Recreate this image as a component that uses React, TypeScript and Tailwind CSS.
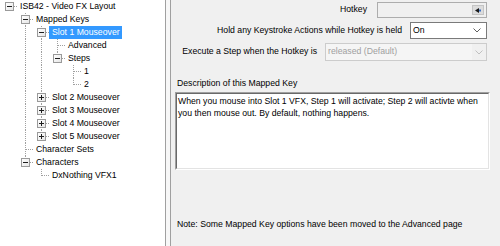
import React from 'react';

type Row = {
    label: string;
    level: number;
    box?: 'minus' | 'plus';
    last: boolean;
    anc: boolean[];
    selected?: boolean;
};

const rows: Row[] = [
    { label: 'ISB42 - Video FX Layout', level: 0, box: 'minus', last: true, anc: [] },
    { label: 'Mapped Keys', level: 1, box: 'minus', last: false, anc: [false] },
    { label: 'Slot 1 Mouseover', level: 2, box: 'minus', last: false, anc: [false, true], selected: true },
    { label: 'Advanced', level: 3, last: false, anc: [false, true, true] },
    { label: 'Steps', level: 3, box: 'minus', last: true, anc: [false, true, true] },
    { label: '1', level: 4, last: false, anc: [false, true, true, false] },
    { label: '2', level: 4, last: true, anc: [false, true, true, false] },
    { label: 'Slot 2 Mouseover', level: 2, box: 'plus', last: false, anc: [false, true] },
    { label: 'Slot 3 Mouseover', level: 2, box: 'plus', last: false, anc: [false, true] },
    { label: 'Slot 4 Mouseover', level: 2, box: 'plus', last: false, anc: [false, true] },
    { label: 'Slot 5 Mouseover', level: 2, box: 'plus', last: true, anc: [false, true] },
    { label: 'Character Sets', level: 1, last: false, anc: [false] },
    { label: 'Characters', level: 1, box: 'minus', last: true, anc: [false] },
    { label: 'DxNothing VFX1', level: 2, last: true, anc: [false, false] },
];

const TreeRow: React.FC<{ row: Row }> = ({ row }) => {
    const isRoot = row.level === 0;
    return (
        <div className="flex h-[13px] items-center">
            {row.anc.map((on, i) => (
                <div key={i} className="relative w-[16px] h-[13px] shrink-0">
                    {on && <span className="absolute left-[8px] top-0 h-[13px] border-l border-dotted border-[#a0a0a0]" />}
                </div>
            ))}
            <div className="relative w-[16px] h-[13px] shrink-0">
                {!isRoot && (
                    <span
                        className={`absolute left-[8px] top-0 border-l border-dotted border-[#a0a0a0] ${row.last ? 'h-[7px]' : 'h-[13px]'}`}
                    />
                )}
                <span className="absolute left-[8px] top-[6px] w-[8px] border-t border-dotted border-[#a0a0a0]" />
                {row.box && (
                    <span className="absolute left-[4px] top-[2px] w-[9px] h-[9px] border border-[#9a9a9a] bg-gradient-to-br from-white to-[#e6e6e6]">
                        <span className="absolute left-[1px] top-[3px] w-[5px] h-[1px] bg-[#1e1e1e]" />
                        {row.box === 'plus' && <span className="absolute left-[3px] top-[1px] w-[1px] h-[5px] bg-[#1e1e1e]" />}
                    </span>
                )}
            </div>
            <span
                className={`h-[13px] leading-[13px] pl-[3px] pr-[2px] whitespace-nowrap ${
                    row.selected ? 'bg-[#3399ff] text-white' : 'text-black'
                }`}
            >
                {row.label}
            </span>
        </div>
    );
};

const Chevron: React.FC<{ color: string }> = ({ color }) => (
    <svg width="8" height="5" viewBox="0 0 8 5" className="shrink-0">
        <path d="M0.5 0.5 L4 4 L7.5 0.5" fill="none" stroke={color} strokeWidth="1" />
    </svg>
);

export default function App() {
    return (
        <div
            className="w-[500px] h-[246px] flex bg-[#f0f0f0] overflow-hidden text-[8.7px]"
            style={{ fontFamily: '"Liberation Sans", Arial, sans-serif' }}
        >
            {/* tree */}
            <div className="w-[166px] h-full bg-white border-r border-[#a0a0a0] pl-[1px] shrink-0">
                {rows.map((r, i) => (
                    <TreeRow key={i} row={r} />
                ))}
            </div>
            <div className="w-[4px] h-full bg-[#f7f7f7] shrink-0" />

            {/* properties */}
            <div className="flex-1 h-full flex flex-col border-l border-[#a0a0a0] text-black">
                <div className="mt-[2px] h-[16px] flex items-center justify-end pr-[13px]">
                    <span>Hotkey</span>
                    <div className="ml-[10px] w-[110px] h-[16px] border border-[#adadad] bg-[#f0f0f0] flex items-center justify-end pr-[2px]">
                        <div className="w-[12px] h-[10px] bg-[#dcdcdc] border border-[#c4c4c4] flex items-center justify-center">
                            <svg width="6" height="5" viewBox="0 0 6 5">
                                <path d="M0 2.5 L4 0 L4 5 Z" fill="#1a1a1a" />
                                <rect x="4" y="1.5" width="2" height="2" fill="#3a6fc4" />
                            </svg>
                        </div>
                    </div>
                </div>

                <div className="mt-[4px] h-[17px] flex items-center justify-end pr-[13px]">
                    <span>Hold any Keystroke Actions while Hotkey is held</span>
                    <div className="ml-[8px] w-[77px] h-[17px] border border-[#7a7a7a] bg-white flex items-center justify-between pl-[2px] pr-[5px]">
                        <span>On</span>
                        <Chevron color="#606060" />
                    </div>
                </div>

                <div className="mt-[4px] h-[18px] flex items-center justify-end pr-[13px]">
                    <span>Execute a Step when the Hotkey is</span>
                    <div className="ml-[8px] w-[162px] h-[18px] border border-[#cccccc] bg-[#f0f0f0] flex items-center">
                        <div className="flex-1 h-full bg-[#f5f5f5] flex items-center pl-[2px] text-[#a0a0a0]">
                            released (Default)
                        </div>
                        <div className="w-[14px] flex items-center justify-center">
                            <Chevron color="#c0c0c0" />
                        </div>
                    </div>
                </div>

                <div className="mt-[16px] h-[12px] leading-[12px] pl-[6px]">Description of this Mapped Key</div>

                <div className="mt-[3px] ml-[4px] w-[315px] h-[78px] border border-t-[#a0a0a0] border-l-[#a0a0a0] border-r-white border-b-white">
                    <div className="w-full h-full border border-t-[#696969] border-l-[#696969] border-r-[#e3e3e3] border-b-[#e3e3e3] bg-white pl-[1px] pt-[1px] leading-[12px]">
                        <div className="whitespace-nowrap">When you mouse into Slot 1 VFX, Step 1 will activate; Step 2 will activte when</div>
                        <div className="whitespace-nowrap">you then mouse out. By default, nothing happens.</div>
                    </div>
                </div>

                <div className="mt-[48px] h-[12px] leading-[12px] pl-[6px]">
                    Note: Some Mapped Key options have been moved to the Advanced page
                </div>
            </div>
        </div>
    );
}
